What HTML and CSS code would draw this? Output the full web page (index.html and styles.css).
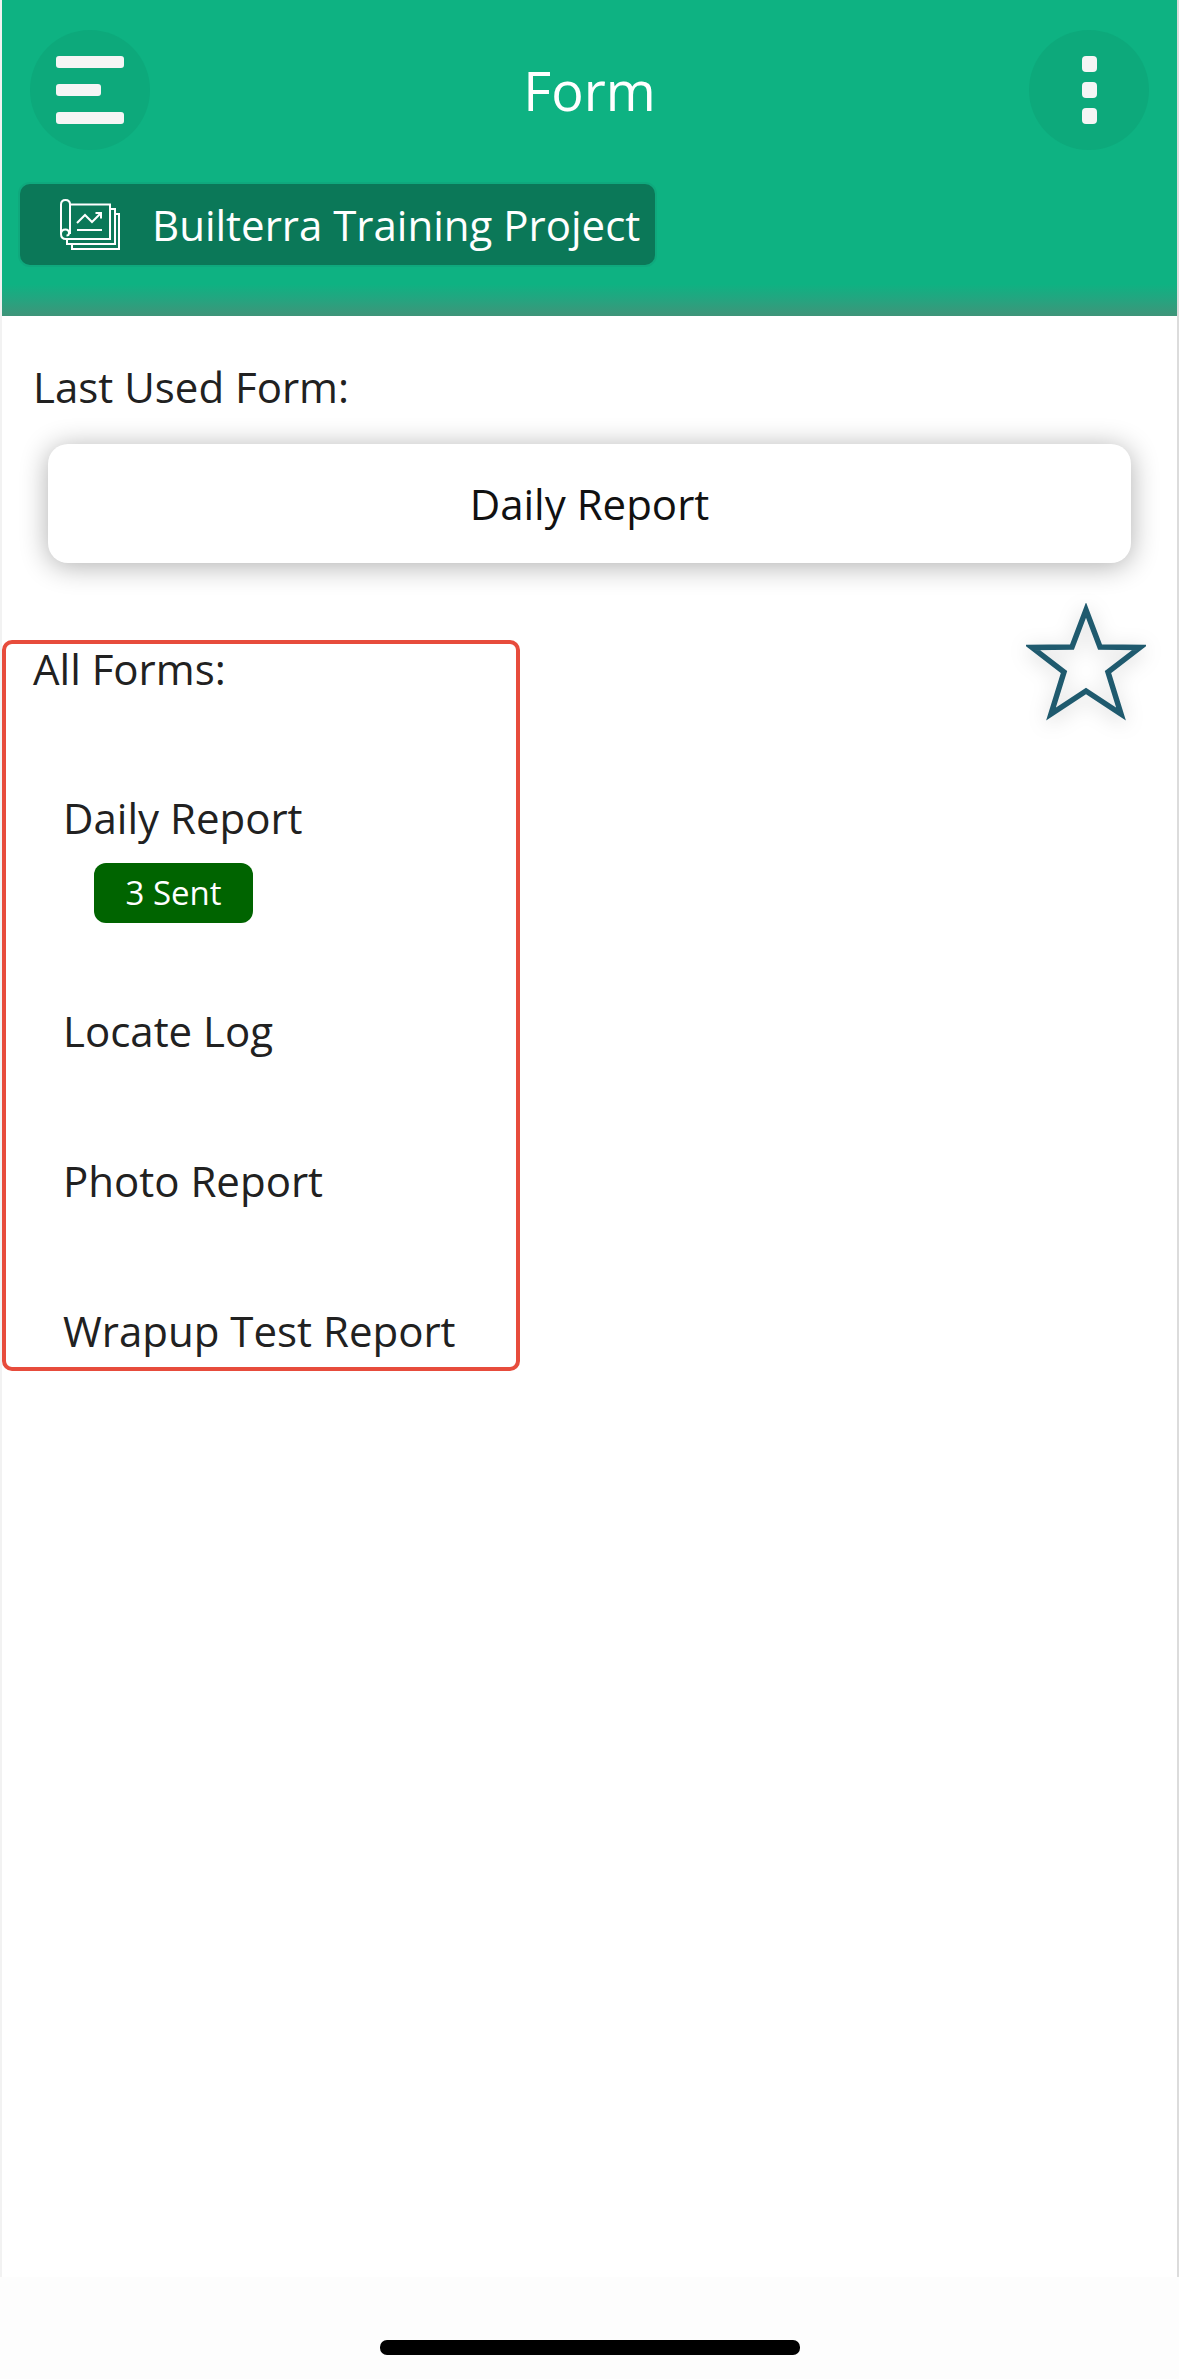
FILE: index.html
```html
<!DOCTYPE html>
<html lang="en">
<head>
  <meta charset="UTF-8" />
  <meta name="viewport" content="width=device-width, initial-scale=1.0" />
  <title>Form</title>
  <link rel="stylesheet" href="styles.css">
</head>
<body>
  <div class="frame">
    <header class="header">
      <div class="topbar">
        <button class="round-btn" aria-label="Menu">
          <span class="bar"></span>
          <span class="bar bar-short"></span>
          <span class="bar"></span>
        </button>
        <h1 class="title">Form</h1>
        <button class="round-btn" aria-label="More">
          <span class="dot"></span>
          <span class="dot"></span>
          <span class="dot"></span>
        </button>
      </div>
      <div class="project">
        <svg class="project-icon" viewBox="0 0 60 51" fill="none" stroke="#fff" stroke-width="2">
          <path d="M10 5.500H50V40H10" />
          <path d="M10 35V5.500C10 2.500 8 1 5.500 1C3 1 1 2.500 1 5.500V35" />
          <path d="M1 35C1 32 3 30.500 5.500 30.500C7.500 30.500 9 32 9 34C9 35.500 8 36.500 6.500 36.500" />
          <path d="M1 35C1 38 3 40 6 40H10" />
          <path d="M50 10H55V45H7V41" />
          <path d="M55 15H59V50H12V46" />
          <path d="M17 24L25 16L32 23L41 14" />
          <path d="M35.500 14H41V19.500" />
          <path d="M17 31H42" />
        </svg>
        <span>Builterra Training Project</span>
      </div>
    </header>

    <main class="content">
      <p class="label last-label">Last Used Form:</p>
      <div class="last-card">Daily Report</div>

      <section class="all-forms">
        <p class="label">All Forms:</p>
        <ul class="form-list">
          <li class="form-item form-item-sent">
            Daily Report
            <span class="badge">3 Sent</span>
          </li>
          <li class="form-item">Locate Log</li>
          <li class="form-item">Photo Report</li>
          <li class="form-item">Wrapup Test Report</li>
        </ul>
      </section>

      <svg class="star" viewBox="0 0 120 118" fill="none" stroke="#1f5a6e" stroke-width="5.500" stroke-linejoin="miter">
        <path d="M60 7L74 44L114 44.500L82 69L95 111L60 88L25 111L38 69L6 44.500L46 44Z" />
      </svg>
    </main>
  </div>

  <div class="home-area">
    <div class="home-bar"></div>
  </div>
</body>
</html>
```

FILE: styles.css
```css
* { box-sizing: border-box; }
html, body {
  margin: 0;
  padding: 0;
  height: 100%;
  background: #fdfdfd;
  font-family: "Open Sans", "Noto Sans", sans-serif;
  color: #212121;
}
.frame {
  position: relative;
  height: 2277px;
  background: #fff;
  border-left: 2px solid #f2f2f2;
  border-right: 2px solid #dcdcdc;
}
.header {
  height: 316px;
  padding: 30px 0 0;
  background: linear-gradient(#0eb282 0, #0eb282 284px, #22a680 298px, #3f9479 316px);
}
.topbar {
  display: grid;
  grid-template-columns: 120px 1fr 120px;
  align-items: center;
  padding: 0 28px;
}
.title {
  margin: 0;
  text-align: center;
  font-size: 54px;
  font-weight: 400;
  line-height: 60px;
  color: #fff;
}
.round-btn {
  display: flex;
  flex-direction: column;
  align-items: center;
  justify-content: center;
  width: 120px;
  height: 120px;
  padding: 0;
  border: none;
  border-radius: 50%;
  background: #0da97b;
}
.bar {
  width: 68px;
  height: 12px;
  border-radius: 3px;
  background: #f5f5f5;
}
.bar + .bar { margin-top: 16px; }
.bar-short {
  width: 45px;
  margin-right: 23px;
}
.dot {
  width: 15px;
  height: 16px;
  border-radius: 4px;
  background: #f5f5f5;
}
.dot + .dot { margin-top: 10px; }
.project {
  display: inline-flex;
  align-items: center;
  gap: 32px;
  height: 81px;
  margin: 34px 0 0 18px;
  padding: 0 15px 0 40px;
  border-radius: 10px;
  background: #0b7858;
  box-shadow: 0 0 0 2px #0fa97d;
  font-size: 42px;
  color: #fff;
}
.project-icon {
  width: 60px;
  height: 51px;
  flex: none;
}
.label {
  margin: 0;
  padding-left: 31px;
  font-size: 42px;
  line-height: 50px;
}
.last-label { padding-top: 46px; }
.last-card {
  height: 119px;
  margin: 32px 46px 0;
  border-radius: 20px;
  background: #fff;
  box-shadow: 0 3px 28px rgba(0, 0, 0, 0.32);
  font-size: 42px;
  line-height: 119px;
  text-align: center;
  color: #111;
}
.all-forms {
  width: 518px;
  height: 731px;
  margin-top: 77px;
  border: 4px solid #e74c3c;
  border-radius: 10px;
}
.all-forms .label { padding-left: 27px; }
.form-list {
  margin: 49px 0 0;
  padding: 0 0 0 57px;
  list-style: none;
}
.form-item {
  padding: 50px 0;
  font-size: 42px;
  line-height: 50px;
}
.form-item-sent { padding-bottom: 33px; }
.badge {
  display: block;
  width: 159px;
  height: 60px;
  margin: 20px 0 0 31px;
  border-radius: 12px;
  background: #006400;
  font-size: 33px;
  line-height: 60px;
  text-align: center;
  color: #fff;
}
.star {
  position: absolute;
  top: 603px;
  right: 31px;
  width: 120px;
  height: 118px;
  filter: drop-shadow(0 4px 10px rgba(0, 0, 0, 0.18));
}
.home-area {
  display: flex;
  justify-content: center;
  padding-top: 63px;
}
.home-bar {
  width: 420px;
  height: 15px;
  border-radius: 7px;
  background: #000;
}
```
